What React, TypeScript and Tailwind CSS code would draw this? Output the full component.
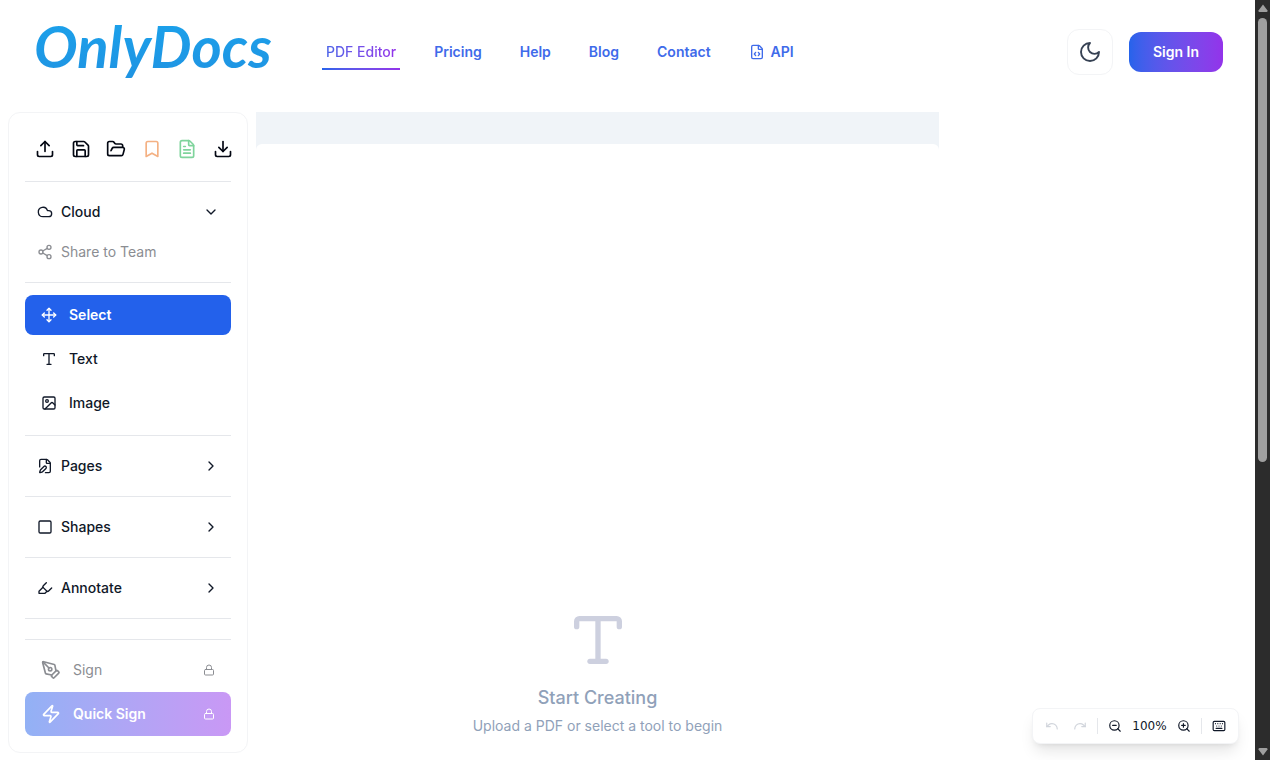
import type { LucideIcon } from 'lucide-react';
import {
  Bookmark, ChevronDown, ChevronRight, Cloud, Download, FileCode, FilePen, FileText, FolderOpen,
  Highlighter, Image, Keyboard, Lock, Move, PenTool, Redo, Save, Share2, Square, Type,
  Undo, Upload, Zap, ZoomIn, ZoomOut,
} from 'lucide-react';

const links = ['Pricing', 'Help', 'Blog', 'Contact'];

const fileActions: { label: string; icon: LucideIcon; tone: string }[] = [
  { label: 'Upload', icon: Upload, tone: 'text-gray-950' },
  { label: 'Save', icon: Save, tone: 'text-gray-950' },
  { label: 'Open', icon: FolderOpen, tone: 'text-gray-950' },
  { label: 'Bookmark', icon: Bookmark, tone: 'text-[#f4b183]' },
  { label: 'Document', icon: FileText, tone: 'text-[#7fd49c]' },
  { label: 'Download', icon: Download, tone: 'text-gray-950' },
];

const tools: { label: string; icon: LucideIcon; active?: boolean }[] = [
  { label: 'Select', icon: Move, active: true },
  { label: 'Text', icon: Type },
  { label: 'Image', icon: Image },
];

const groups: { label: string; icon: LucideIcon }[] = [
  { label: 'Pages', icon: FilePen },
  { label: 'Shapes', icon: Square },
  { label: 'Annotate', icon: Highlighter },
];

function MoonIcon() {
  return (
    <svg width="24" height="24" viewBox="0 0 24 24" fill="none" stroke="currentColor" strokeWidth="1.9" strokeLinecap="round" strokeLinejoin="round">
      <path d="M12 3a6 6 0 0 0 9 9 9 9 0 1 1-9-9Z" />
    </svg>
  );
}

function Header() {
  return (
    <header className="flex h-[104px] shrink-0 items-center justify-between px-8">
      <div className="flex items-center">
        <a
          href="#"
          className="w-[290px] bg-linear-to-b from-[#1aa3ec] to-[#2090e0] bg-clip-text pb-3 pl-0.5 font-['Lato',sans-serif] text-[58px] leading-[72px] font-bold text-transparent italic"
        >
          OnlyDocs
        </a>
        <nav className="flex items-center gap-[30px] text-sm font-semibold text-[#3f6bea]">
          <a href="#" className="relative px-1 py-2">
            <span className="bg-linear-to-r from-[#4a63e8] to-[#9333ea] bg-clip-text font-medium text-transparent">
              PDF Editor
            </span>
            <span className="absolute inset-x-0 bottom-0 h-0.5 bg-linear-to-r from-[#2563eb] to-[#9333ea]" />
          </a>
          {links.map((l) => (
            <a key={l} href="#" className="px-1 py-2">{l}</a>
          ))}
          <a href="#" className="flex items-center gap-1.5 px-1 py-2">
            <FileCode size={16} />
            API
          </a>
        </nav>
      </div>
      <div className="flex items-center gap-4">
        <button aria-label="Dark mode" className="flex size-[46px] items-center justify-center rounded-xl border border-gray-100 bg-white text-gray-700">
          <MoonIcon />
        </button>
        <button className="h-10 rounded-xl bg-linear-to-r from-[#2563eb] to-[#9333ea] px-6 text-sm font-semibold text-white">
          Sign In
        </button>
      </div>
    </header>
  );
}

function Sidebar() {
  return (
    <aside className="w-60 shrink-0 rounded-xl border border-gray-100 bg-white p-4 text-sm font-medium text-gray-900">
      <div className="border-b border-gray-200 pb-3">
        <div className="-mr-0.5 flex h-10 items-center justify-between pl-2.5">
          {fileActions.map(({ label, icon: Icon, tone }) => (
            <button key={label} aria-label={label} className={tone}>
              <Icon size={20} />
            </button>
          ))}
        </div>
      </div>
      <div className="border-b border-gray-200 py-2.5">
        <button className="flex h-10 w-full items-center gap-2 px-3">
          <Cloud size={16} />
          Cloud
          <ChevronDown size={16} className="ml-auto" />
        </button>
        <button className="flex h-10 w-full items-center gap-2 px-3 font-normal text-[#8b8d92]">
          <Share2 size={16} />
          Share to Team
        </button>
      </div>
      <div className="flex flex-col gap-1 border-b border-gray-200 py-3">
        {tools.map(({ label, icon: Icon, active }) => (
          <button
            key={label}
            className={
              active
                ? 'flex h-10 items-center gap-3 rounded-lg bg-[#2361eb] px-4 font-semibold text-white'
                : 'flex h-10 items-center gap-3 rounded-lg px-4'
            }
          >
            <Icon size={16} />
            {label}
          </button>
        ))}
      </div>
      {groups.map(({ label, icon: Icon }) => (
        <div key={label} className="border-b border-gray-200 py-2.5">
          <button className="flex h-10 w-full items-center gap-2 px-3">
            <Icon size={16} />
            {label}
            <ChevronRight size={16} className="ml-auto" />
          </button>
        </div>
      ))}
      <div className="mt-5 border-t border-gray-200 pt-2">
        <button className="flex h-11 w-full items-center gap-3 px-4 font-normal text-[#8b8d92]">
          <PenTool size={20} />
          Sign
          <Lock size={12} className="ml-auto" />
        </button>
        <button className="flex h-11 w-full items-center gap-3 rounded-lg bg-linear-to-r from-[#92b1f5] to-[#c998f5] px-4 font-semibold text-white">
          <Zap size={20} />
          Quick Sign
          <Lock size={12} className="ml-auto" />
        </button>
      </div>
    </aside>
  );
}

function Canvas() {
  return (
    <main className="flex min-w-0 flex-1 items-start pr-[316px]">
      <div className="w-full bg-[#f0f4f8] pt-8">
        <div className="flex min-h-[1056px] flex-col items-center justify-center rounded-md bg-white text-slate-400">
          <Type size={64} className="mb-3 text-[#cdd0df]" />
          <h2 className="mb-1 text-lg leading-7 font-medium">Start Creating</h2>
          <p className="text-sm">Upload a PDF or select a tool to begin</p>
        </div>
      </div>
    </main>
  );
}

function ViewControls() {
  const button = 'flex h-7 w-7 items-center justify-center';
  return (
    <div className="absolute right-4 bottom-4 flex h-9 items-center rounded-lg border border-gray-100 bg-white px-[5px] text-gray-900 shadow-lg">
      <button aria-label="Undo" disabled className={`${button} text-gray-300`}><Undo size={14} /></button>
      <button aria-label="Redo" disabled className={`${button} text-gray-300`}><Redo size={14} /></button>
      <span className="mx-[3px] h-4 w-px bg-gray-200" />
      <button aria-label="Zoom out" className={button}><ZoomOut size={14} /></button>
      <span className="w-[41px] text-center font-['DejaVu_Sans',sans-serif] text-xs">100%</span>
      <button aria-label="Zoom in" className={button}><ZoomIn size={14} /></button>
      <span className="mx-[3px] h-4 w-px bg-gray-200" />
      <button aria-label="Keyboard shortcuts" className={button}><Keyboard size={14} /></button>
    </div>
  );
}

function ScrollTrack() {
  return (
    <div aria-hidden="true" className="flex w-[15px] shrink-0 flex-col items-center justify-between bg-[#2c2c2c] py-1 text-[#9f9f9f]">
      <svg width="10" height="8" viewBox="0 0 10 8" fill="currentColor" className="shrink-0"><path d="M5 .5 9.5 6.5Q9.8 8 8.5 8H1.5Q.2 8 .5 6.5Z" /></svg>
      <div className="flex w-[9px] flex-1 flex-col py-1.5">
        <div className="h-[61.3%] rounded-full bg-[#9f9f9f]" />
      </div>
      <svg width="10" height="8" viewBox="0 0 10 8" fill="currentColor" className="shrink-0"><path d="M5 7.5.5 1.5Q.2 0 1.5 0H8.5Q9.8 0 9.5 1.5Z" /></svg>
    </div>
  );
}

export default function App() {
  return (
    <div className="flex h-screen overflow-hidden bg-white font-['Inter',sans-serif]">
      <div className="relative flex min-w-0 flex-1 flex-col overflow-hidden">
        <Header />
        <div className="flex items-start gap-2 p-2 pr-0">
          <Sidebar />
          <Canvas />
        </div>
        <ViewControls />
      </div>
      <ScrollTrack />
    </div>
  );
}
